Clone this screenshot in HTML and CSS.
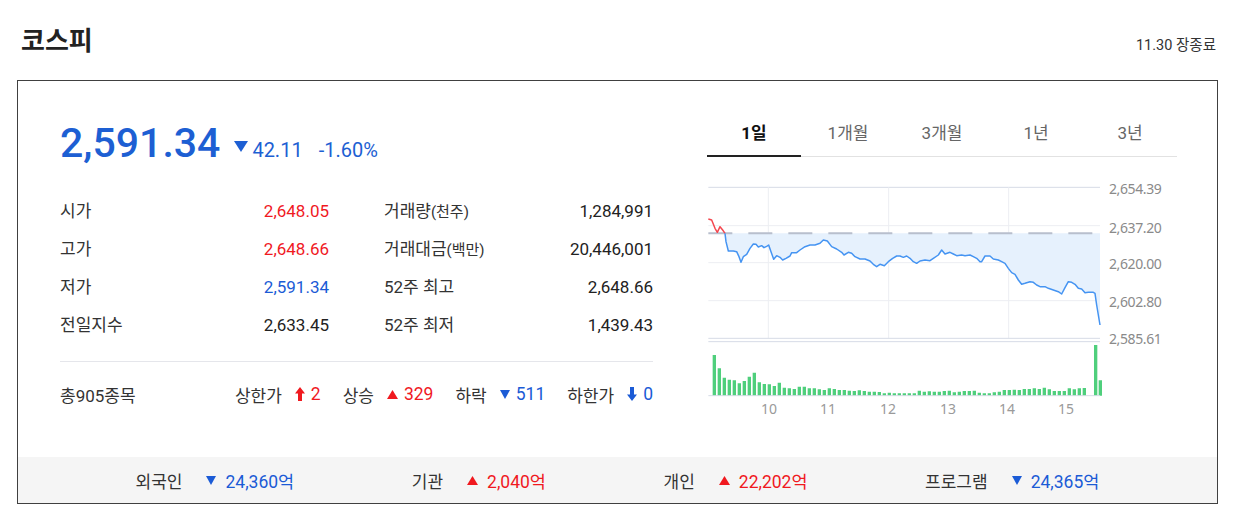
FILE: index.html
```html
<!DOCTYPE html>
<html lang="ko">
<head>
<meta charset="utf-8">
<title>코스피</title>
<link rel="stylesheet" href="styles.css">
</head>
<body>
<div class="page">
  <header class="head">
    <h1 class="title">코스피</h1>
    <span class="status">11.30 장종료</span>
  </header>
  <section class="box">
    <div class="main">
      <div class="left">
        <div class="price-row"><span class="price">2,591.34</span><svg class="tri-lg" width="14" height="11" viewBox="0 0 14 11"><path d="M0 0H14L7 11Z"/></svg><span class="chg">42.11</span><span class="rate">-1.60%</span></div>
        <div class="stats">
          <div class="cell"><span class="lbl">시가</span><span class="val up">2,648.05</span></div>
          <div class="cell"><span class="lbl">거래량<small>(천주)</small></span><span class="val">1,284,991</span></div>
          <div class="cell"><span class="lbl">고가</span><span class="val up">2,648.66</span></div>
          <div class="cell"><span class="lbl">거래대금<small>(백만)</small></span><span class="val">20,446,001</span></div>
          <div class="cell"><span class="lbl">저가</span><span class="val dn">2,591.34</span></div>
          <div class="cell"><span class="lbl">52주 최고</span><span class="val">2,648.66</span></div>
          <div class="cell"><span class="lbl">전일지수</span><span class="val">2,633.45</span></div>
          <div class="cell"><span class="lbl">52주 최저</span><span class="val">1,439.43</span></div>
        </div>
        <div class="divider"></div>
        <div class="breadth">
          <span class="total">총905종목</span>
          <div class="counts">
            <div class="count"><span class="c-lbl">상한가</span><svg class="ico up-fill" width="10" height="14" viewBox="0 0 10 14"><path d="M5 0L10 6.5H7V14H3V6.5H0Z"/></svg><span class="num up">2</span></div>
            <div class="count"><span class="c-lbl">상승</span><svg class="ico up-fill" width="11" height="9" viewBox="0 0 11 9"><path d="M5.5 0L11 9H0Z"/></svg><span class="num up">329</span></div>
            <div class="count"><span class="c-lbl">하락</span><svg class="ico dn-fill" width="10" height="9" viewBox="0 0 10 9"><path d="M0 0H10L5 9Z"/></svg><span class="num dn">511</span></div>
            <div class="count"><span class="c-lbl">하한가</span><svg class="ico dn-fill" width="10" height="14" viewBox="0 0 10 14"><path d="M3 0H7V7.5H10L5 14L0 7.5H3Z"/></svg><span class="num dn">0</span></div>
          </div>
        </div>
      </div>
      <div class="right">
        <div class="tabs">
          <span class="tab on">1일</span>
          <span class="tab">1개월</span>
          <span class="tab">3개월</span>
          <span class="tab">1년</span>
          <span class="tab">3년</span>
        </div>
        <svg class="chart" width="470" height="263" viewBox="707 157 470 263">
          <g transform="translate(700 175) scale(0.33333)">
            <g class="grid">
              <line x1="25" y1="37" x2="1200" y2="37" class="g-top"/>
              <line x1="25" y1="152" x2="1200" y2="152"/>
              <line x1="25" y1="263" x2="1200" y2="263"/>
              <line x1="25" y1="377" x2="1200" y2="377"/>
              <line x1="205" y1="37" x2="205" y2="490"/>
              <line x1="566" y1="37" x2="566" y2="490"/>
              <line x1="926" y1="37" x2="926" y2="490"/>
              <line x1="25" y1="490" x2="1200" y2="490" class="g-top"/>
              <line x1="25" y1="500" x2="1200" y2="500" class="g-top"/>
            </g>
            <path class="area" d="M75 175L78 200 85 228 100 228 110 230 117 245 123 262 130 245 140 238 150 220 160 207 168 208 175 216 185 212 192 218 200 214 206 210 213 230 221 253 230 242 240 247 248 255 258 250 270 243 275 233 290 233 300 225 315 215 330 210 345 210 360 205 370 195 382 198 395 215 410 222 425 232 432 240 445 232 455 235 465 245 480 252 495 252 510 258 520 268 530 275 540 268 553 272 565 260 578 250 590 243 600 243 610 247 620 243 630 250 640 260 650 265 660 258 675 255 690 257 700 250 715 240 725 225 735 237 750 232 760 237 770 242 785 240 795 242 810 240 820 245 830 250 840 260 845 260 855 243 870 243 880 252 895 255 905 260 915 265 925 280 935 293 945 298 955 315 965 328 975 325 990 320 1000 322 1010 330 1020 335 1035 335 1045 340 1060 345 1075 350 1085 357 1095 338 1105 320 1115 322 1125 328 1135 340 1145 342 1155 353 1165 352 1180 352 1185 355 1190 390 1200 450L1200 175Z"/>
            <line class="base" x1="25" y1="175" x2="1200" y2="175"/>
            <path class="ln-up" d="M25 132L35 135 45 160 52 172 60 155 68 165 75 175"/>
            <path class="ln-dn" d="M75 175L78 200 85 228 100 228 110 230 117 245 123 262 130 245 140 238 150 220 160 207 168 208 175 216 185 212 192 218 200 214 206 210 213 230 221 253 230 242 240 247 248 255 258 250 270 243 275 233 290 233 300 225 315 215 330 210 345 210 360 205 370 195 382 198 395 215 410 222 425 232 432 240 445 232 455 235 465 245 480 252 495 252 510 258 520 268 530 275 540 268 553 272 565 260 578 250 590 243 600 243 610 247 620 243 630 250 640 260 650 265 660 258 675 255 690 257 700 250 715 240 725 225 735 237 750 232 760 237 770 242 785 240 795 242 810 240 820 245 830 250 840 260 845 260 855 243 870 243 880 252 895 255 905 260 915 265 925 280 935 293 945 298 955 315 965 328 975 325 990 320 1000 322 1010 330 1020 335 1035 335 1045 340 1060 345 1075 350 1085 357 1095 338 1105 320 1115 322 1125 328 1135 340 1145 342 1155 353 1165 352 1180 352 1185 355 1190 390 1200 450"/>
            <path class="bars" d="M38 662V540h10V662zM53 662V580h10V662zM68 662V608h10V662zM83 662V614h10V662zM98 662V616h10V662zM113 662V625h10V662zM128 662V618h10V662zM143 662V605h10V662zM158 662V593h10V662zM173 662V622h10V662zM188 662V627h10V662zM203 662V628h10V662zM218 662V633h10V662zM233 662V623h10V662zM248 662V638h10V662zM263 662V640h10V662zM278 662V642h10V662zM293 662V635h10V662zM308 662V635h10V662zM323 662V640h10V662zM338 662V640h10V662zM353 662V643h10V662zM368 662V645h10V662zM383 662V640h10V662zM398 662V642h10V662zM413 662V645h10V662zM428 662V645h10V662zM443 662V647h10V662zM458 662V648h10V662zM473 662V646h10V662zM488 662V648h10V662zM503 662V650h10V662zM518 662V650h10V662zM533 662V651h10V662zM548 662V655h10V662zM563 662V653h10V662zM578 662V655h10V662zM593 662V655h10V662zM608 662V655h10V662zM623 662V655h10V662zM638 662V655h10V662zM653 662V647h10V662zM668 662V650h10V662zM683 662V649h10V662zM698 662V650h10V662zM713 662V650h10V662zM728 662V648h10V662zM743 662V647h10V662zM758 662V652h10V662zM773 662V650h10V662zM788 662V648h10V662zM803 662V648h10V662zM818 662V647h10V662zM833 662V653h10V662zM848 662V655h10V662zM863 662V655h10V662zM878 662V652h10V662zM893 662V650h10V662zM908 662V645h10V662zM923 662V645h10V662zM938 662V644h10V662zM953 662V645h10V662zM968 662V642h10V662zM983 662V642h10V662zM998 662V640h10V662zM1013 662V642h10V662zM1028 662V638h10V662zM1043 662V643h10V662zM1058 662V648h10V662zM1073 662V648h10V662zM1088 662V648h10V662zM1103 662V640h10V662zM1118 662V643h10V662zM1133 662V640h10V662zM1148 662V639h10V662zM1182 662V510h10V662zM1196 662V616h10V662z"/>
            <line class="axis" x1="25" y1="662" x2="1200" y2="662"/>
          </g>
          <g class="ylab">
            <text x="1109" y="188">2,654.39</text>
            <text x="1109" y="227">2,637.20</text>
            <text x="1109" y="263">2,620.00</text>
            <text x="1109" y="301">2,602.80</text>
            <text x="1109" y="338">2,585.61</text>
          </g>
          <g class="xlab">
            <text x="769" y="408">10</text>
            <text x="828" y="408">11</text>
            <text x="888" y="408">12</text>
            <text x="948" y="408">13</text>
            <text x="1007" y="408">14</text>
            <text x="1066" y="408">15</text>
          </g>
        </svg>
      </div>
    </div>
    <div class="flows">
      <div class="flow"><span class="f-lbl">외국인</span><svg class="f-ico dn-fill" width="10" height="9" viewBox="0 0 10 9"><path d="M0 0H10L5 9Z"/></svg><span class="f-val dn">24,360억</span></div>
      <div class="flow"><span class="f-lbl">기관</span><svg class="f-ico up-fill" width="11" height="9" viewBox="0 0 11 9"><path d="M5.5 0L11 9H0Z"/></svg><span class="f-val up">2,040억</span></div>
      <div class="flow"><span class="f-lbl">개인</span><svg class="f-ico up-fill" width="11" height="9" viewBox="0 0 11 9"><path d="M5.5 0L11 9H0Z"/></svg><span class="f-val up">22,202억</span></div>
      <div class="flow"><span class="f-lbl">프로그램</span><svg class="f-ico dn-fill" width="10" height="9" viewBox="0 0 10 9"><path d="M0 0H10L5 9Z"/></svg><span class="f-val dn">24,365억</span></div>
    </div>
  </section>
</div>
</body>
</html>
```

FILE: styles.css
```css
* { box-sizing: border-box; }
body {
  margin: 0;
  background: #fff;
  color: #222;
  font-family: Roboto, "Noto Sans CJK KR", sans-serif;
}
.page {
  width: 1201px;
  margin-left: 17px;
}
.head {
  height: 80px;
  display: flex;
  justify-content: space-between;
  align-items: baseline;
}
.title {
  margin: 0;
  padding: 23px 0 0 4px;
  font: 700 26px/32px "Noto Sans CJK KR", sans-serif;
  color: #222;
}
.status {
  font-size: 14.5px;
  color: #333;
  padding-right: 2px;
}
.box {
  border: 1px solid #404040;
}
.main {
  display: flex;
  gap: 54px;
  padding-left: 42px;
  height: 376px;
}
.left {
  width: 593px;
  padding-top: 37px;
}
.price-row {
  height: 50px;
  font-size: 41px;
  line-height: 50px;
  white-space: nowrap;
  color: #1d5fd3;
}
.price {
  font-weight: 500;
}
.tri-lg {
  fill: #1d5fd3;
  margin-left: 14px;
  vertical-align: 5px;
}
.chg {
  font-size: 20px;
  margin-left: 4px;
}
.rate {
  font-size: 20px;
  margin-left: 16px;
}
.stats {
  margin-top: 24px;
  display: grid;
  grid-template-columns: 269px 269px;
  column-gap: 55px;
  grid-auto-rows: 38px;
  font-size: 17px;
  line-height: 38px;
}
.cell {
  display: flex;
  justify-content: space-between;
}
.lbl { color: #333; }
.lbl small { font-size: 15px; }
.val { color: #222; }
.up { color: #f0191f; }
.dn { color: #1b5bd6; }
.up-fill { fill: #f0191f; }
.dn-fill { fill: #1b5bd6; }
.divider {
  margin-top: 17px;
  height: 1px;
  background: #e5e6eb;
}
.breadth {
  margin-top: 13px;
  height: 38px;
  display: flex;
  justify-content: space-between;
  align-items: center;
  font-size: 17px;
}
.total { color: #333; }
.counts {
  display: flex;
  gap: 22px;
}
.count {
  display: flex;
  align-items: center;
}
.c-lbl { color: #333; margin-right: 13px; }
.ico { margin-right: 6px; }
.num { font-size: 17.5px; }
.right {
  width: 470px;
  padding-top: 30px;
}
.tabs {
  display: flex;
  box-shadow: inset 0 -1px 0 #e2e2e2;
}
.tab {
  flex: 1;
  height: 46px;
  line-height: 44px;
  text-align: center;
  font-size: 17px;
  color: #666;
  border-bottom: 2px solid transparent;
}
.tab.on {
  color: #111;
  font-weight: 700;
  border-bottom-color: #222;
}
.chart {
  display: block;
}
.grid line {
  stroke: #eceef2;
  stroke-width: 1;
  vector-effect: non-scaling-stroke;
}
.grid line.g-top {
  stroke: #d6dbe6;
}
.area { fill: #e6f1fd; }
.base {
  stroke: #b8bfcd;
  stroke-width: 2;
  stroke-dasharray: 24 16;
  vector-effect: non-scaling-stroke;
}
.ln-up, .ln-dn {
  fill: none;
  stroke-width: 1.5;
  stroke-linejoin: round;
  vector-effect: non-scaling-stroke;
}
.ln-up { stroke: #f4474f; }
.ln-dn { stroke: #4594f2; }
.bars { fill: #4fcf7c; }
.axis {
  stroke: #d6dbe6;
  stroke-width: 1;
  vector-effect: non-scaling-stroke;
}
.ylab text {
  font-family: "Noto Sans", sans-serif;
  font-size: 14px;
  letter-spacing: -0.4px;
  fill: #8a8a8a;
  dominant-baseline: central;
}
.xlab text {
  font-family: "Noto Sans", sans-serif;
  font-size: 14px;
  fill: #9a9a9a;
  text-anchor: middle;
  dominant-baseline: central;
}
.flows {
  height: 46px;
  background: #f5f5f5;
  display: flex;
  justify-content: space-evenly;
  align-items: center;
  font-size: 17px;
}
.flow {
  display: flex;
  align-items: center;
}
.f-lbl { color: #333; margin-right: 24px; }
.f-ico { margin-right: 9px; }
.f-val { font-size: 17.5px; }
```
